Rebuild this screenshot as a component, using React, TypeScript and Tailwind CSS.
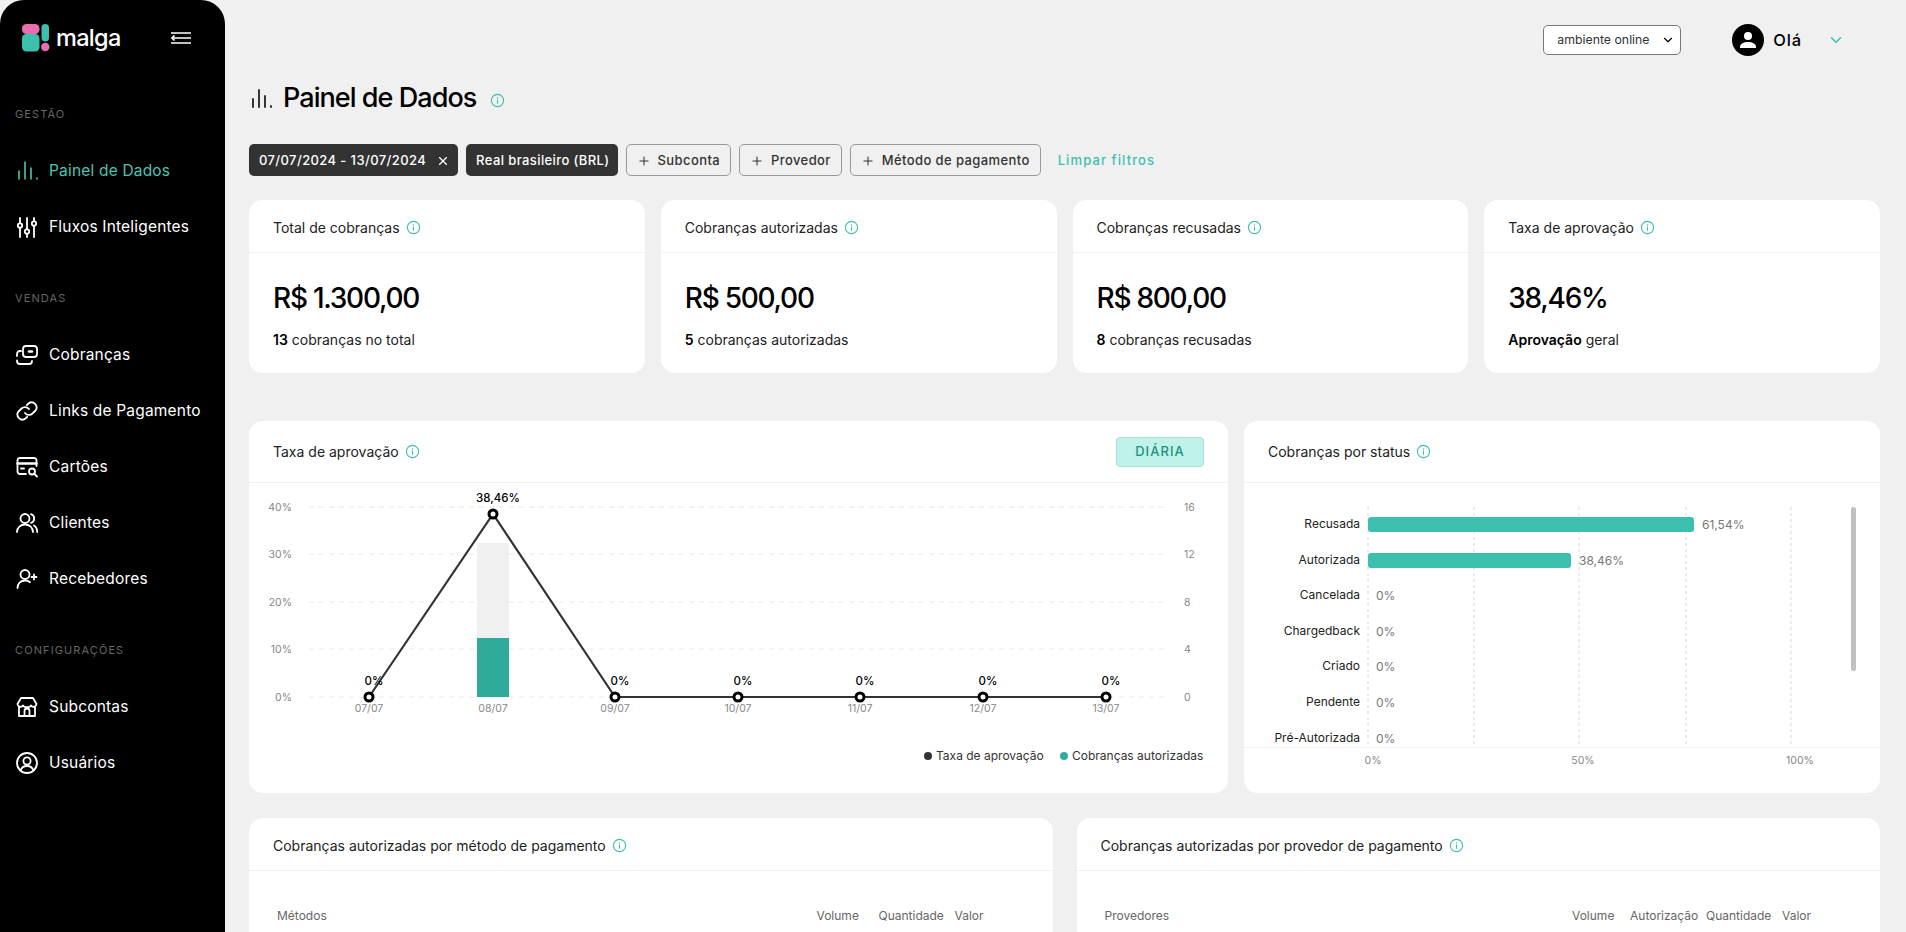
import React from "react";
import { ChevronDown, Plus, X } from "lucide-react";

const font = { fontFamily: "Inter, 'Noto Sans', sans-serif" };

function Info({ className = "" }: { className?: string }) {
  return (
    <svg viewBox="0 0 16 16" className={"w-[15px] h-[15px] shrink-0 " + className} fill="none">
      <circle cx="8" cy="8" r="6.5" stroke="#3dbfae" strokeWidth="1.2" />
      <path d="M8 7.4v3.4" stroke="#3dbfae" strokeWidth="1.2" strokeLinecap="round" />
      <circle cx="8" cy="5.2" r="0.8" fill="#3dbfae" />
    </svg>
  );
}

function BarsIcon({ color, className, width = 1.6 }: { color: string; className: string; width?: number }) {
  return (
    <svg viewBox="0 0 24 24" className={className} fill="none" stroke={color} strokeWidth={width} strokeLinecap="round">
      <path d="M4 20v-8M10 20V3M16 20V9M22 20v-1" />
    </svg>
  );
}

const S = { fill: "none", stroke: "#fff", strokeWidth: 1.8, strokeLinecap: "round" as const, strokeLinejoin: "round" as const };

const icons: Record<string, React.ReactNode> = {
  bars: <BarsIcon color="#4dc4b2" className="w-6 h-6" />,
  flows: (
    <svg viewBox="0 0 24 24" className="w-6 h-6" {...S}>
      <path d="M5 3v5M5 13v9M12 3v11M12 19v3M19 3v3M19 11v11" />
      <circle cx="5" cy="10.5" r="2.2" />
      <circle cx="12" cy="16.5" r="2.2" />
      <circle cx="19" cy="8.5" r="2.2" />
    </svg>
  ),
  charges: (
    <svg viewBox="0 0 24 24" className="w-6 h-6" {...S}>
      <rect x="8" y="3" width="14" height="11" rx="3" />
      <path d="M14 8.500h3" strokeWidth="2.600" />
      <path d="M6 8H5a3 3 0 0 0-3 3v2M2 17.500v.500a3 3 0 0 0 3 3h9a3 3 0 0 0 3-3" />
    </svg>
  ),
  link: (
    <svg viewBox="0 0 24 24" className="w-6 h-6" {...S}>
      <path d="M10 14a5 5 0 0 0 7.500.500l3-3a5 5 0 0 0-7-7l-1.700 1.700" />
      <path d="M14 10a5 5 0 0 0-7.500-.500l-3 3a5 5 0 0 0 7 7l1.700-1.700" />
    </svg>
  ),
  cards: (
    <svg viewBox="0 0 24 24" className="w-6 h-6" {...S}>
      <path d="M11 19H5a2.500 2.500 0 0 1-2.500-2.500v-11A2.500 2.500 0 0 1 5 3h14a2.500 2.500 0 0 1 2.500 2.500V11" />
      <path d="M2.500 8.500h19" strokeWidth="2.400" />
      <path d="M6 13.500h3" />
      <circle cx="17" cy="16.500" r="3" />
      <path d="m19.500 19 2.500 2.500" />
    </svg>
  ),
  users: (
    <svg viewBox="0 0 24 24" className="w-6 h-6" {...S}>
      <circle cx="10" cy="7.500" r="4.500" />
      <path d="M2 21c0-4.500 3.500-7.500 8-7.500s8 3 8 7.500" />
      <path d="M16 3.200a4.500 4.500 0 0 1 0 8.600M19 14.500c2 1.200 3.200 3.500 3.200 6.500" />
    </svg>
  ),
  receivers: (
    <svg viewBox="0 0 24 24" className="w-6 h-6" {...S}>
      <circle cx="10" cy="7.500" r="4.500" />
      <path d="M2.500 21c0-4.500 3.200-7.500 7.500-7.500 2 0 3.700.600 5 1.700" />
      <path d="M19 7.500v5M16.500 10h5" />
    </svg>
  ),
  store: (
    <svg viewBox="0 0 24 24" className="w-6 h-6" {...S}>
      <path d="M6 3h12l3.500 6a3 3 0 0 1-5.500 1.500A3.500 3.500 0 0 1 12 12a3.500 3.500 0 0 1-4-1.500A3 3 0 0 1 2.500 9z" />
      <path d="M4 12v9h16v-9M9.500 21v-5a2.500 2.500 0 0 1 5 0v5" />
    </svg>
  ),
  user: (
    <svg viewBox="0 0 24 24" className="w-6 h-6" {...S}>
      <circle cx="12" cy="12" r="10" />
      <circle cx="12" cy="10" r="3.600" />
      <path d="M5.500 19.500c1-3 3.500-4.500 6.500-4.500s5.500 1.500 6.500 4.500" />
    </svg>
  ),
};

function Section({ label, className }: { label: string; className: string }) {
  return (
    <div className={"pl-[15px] h-4 flex items-center text-[11px] tracking-[0.1em] text-[#666] " + className}>{label}</div>
  );
}

function NavItem({ icon, label, active }: { icon: string; label: string; active?: boolean }) {
  return (
    <div className="h-14 pl-[15px] flex items-center gap-[10px]">
      <span className="w-6 h-6 shrink-0">{icons[icon]}</span>
      <span className={"text-[15.5px] tracking-[0.012em] " + (active ? "text-[#4dc4b2]" : "text-white")}>{label}</span>
    </div>
  );
}

function Sidebar() {
  return (
    <aside className="w-[225px] shrink-0 h-full bg-black rounded-t-[24px] flex flex-col">
      <div className="h-[76px] pl-[22px] pr-[34px] pt-[24px] flex items-start justify-between">
        <div className="flex items-start gap-[6px]">
          <svg viewBox="0 0 28 28" className="w-7 h-7">
            <rect x="0" y="0" width="17.500" height="10" rx="4.500" fill="#e86fae" />
            <rect x="0" y="10" width="17.500" height="17.500" rx="4.500" fill="#3dbfae" />
            <rect x="19.500" y="0" width="7.500" height="17.500" rx="3.700" fill="#3dbfae" />
            <circle cx="23.250" cy="23" r="4.200" fill="#e86fae" />
          </svg>
          <span className="text-white text-[23.500px] font-medium leading-[28px] tracking-[-0.03em]">malga</span>
        </div>
        <svg viewBox="0 0 20 12" className="w-5 h-3 mt-2" fill="none" stroke="#fff" strokeWidth="1.600">
          <path d="M0 1h20M2 6h18M0 11h20" />
          <path d="M3.500 3.500 1 6l2.500 2.500" />
        </svg>
      </div>
      <Section label="GESTÃO" className="mt-[30px]" />
      <div className="mt-[21px]">
        <NavItem icon="bars" label="Painel de Dados" active />
        <NavItem icon="flows" label="Fluxos Inteligentes" />
      </div>
      <Section label="VENDAS" className="mt-[35px]" />
      <div className="mt-[21px]">
        <NavItem icon="charges" label="Cobranças" />
        <NavItem icon="link" label="Links de Pagamento" />
        <NavItem icon="cards" label="Cartões" />
        <NavItem icon="users" label="Clientes" />
        <NavItem icon="receivers" label="Recebedores" />
      </div>
      <Section label="CONFIGURAÇÕES" className="mt-[35px]" />
      <div className="mt-[21px]">
        <NavItem icon="store" label="Subcontas" />
        <NavItem icon="user" label="Usuários" />
      </div>
    </aside>
  );
}

function CardHeader({ title, right }: { title: string; right?: React.ReactNode }) {
  return (
    <div className="flex items-center justify-between border-b border-[#f0f0f0] px-6 h-[53px] pt-[2px]">
      <div className="flex items-center gap-[6px] text-[14px] text-[#222]">
        <span>{title}</span>
        <Info />
      </div>
      {right}
    </div>
  );
}

function Stat({ title, value, bold, rest }: { title: string; value: string; bold: string; rest: string }) {
  return (
    <div className="bg-white rounded-[14px] h-[173px]">
      <CardHeader title={title} />
      <div className="px-6 pt-[27px]">
        <div className="text-[28px] leading-[36px] font-medium tracking-[-0.045em] text-black">{value}</div>
        <div className="mt-[14px] text-[14px] leading-5 text-[#222]">
          <span className="font-semibold text-black">{bold}</span> {rest}
        </div>
      </div>
    </div>
  );
}

function Chip({ children }: { children: React.ReactNode }) {
  return (
    <div className="h-8 pt-[2px] pl-[10px] pr-[8px] bg-[#333] rounded-[5px] text-white text-[13px] font-medium tracking-[0.4px] flex items-center gap-[10px]">{children}</div>
  );
}

function AddChip({ label }: { label: string }) {
  return (
    <div className="h-8 pt-[2px] px-[10px] border border-[#999] rounded-[5px] text-[#333] text-[13px] font-medium flex items-center gap-[7px] tracking-[0.4px]">
      <Plus size={14} strokeWidth={1.8} />
      {label}
    </div>
  );
}

const points = [369, 493, 615, 738, 860, 983, 1106];
const dates = ["07/07", "08/07", "09/07", "10/07", "11/07", "12/07", "13/07"];
const ys = [507, 554, 602, 649, 697];

function LineChart() {
  const ox = 249;
  const oy = 483;
  return (
    <svg width="979" height="310" viewBox={`${ox} ${oy} 979 310`} className="block" style={font}>
      {ys.map((y) => (
        <line key={y} x1="309" x2="1168" y1={y} y2={y} stroke="#e8e8e8" strokeDasharray="5 5" />
      ))}
      {["40%", "30%", "20%", "10%", "0%"].map((t, i) => (
        <text key={t} x="292" y={ys[i] + 4} textAnchor="end" fontSize="10.500" fill="#888">{t}</text>
      ))}
      {["16", "12", "8", "4", "0"].map((t, i) => (
        <text key={t} x="1184" y={ys[i] + 4} fontSize="10.500" fill="#888">{t}</text>
      ))}
      <rect x="477" y="543" width="32" height="95" fill="#f0f0f0" />
      <rect x="477" y="638" width="32" height="59" fill="#2fab9b" />
      <polyline
        points={points.map((x, i) => `${x},${i === 1 ? 514 : 697}`).join(" ")}
        fill="none"
        stroke="#333"
        strokeWidth="2.200"
      />
      {points.map((x, i) => (
        <g key={x}>
          <circle cx={x} cy={i === 1 ? 514 : 697} r="4" fill="#fff" stroke="#000" strokeWidth="3" />
          <text x={x + 5} y={i === 1 ? 502 : 685} textAnchor="middle" fontSize="11.500" fontWeight="500" fill="#000">
            {i === 1 ? "38,46%" : "0%"}
          </text>
          <text x={x} y="712" textAnchor="middle" fontSize="10.500" fill="#888">{dates[i]}</text>
        </g>
      ))}
      <circle cx="928" cy="756" r="4" fill="#333" />
      <text x="936" y="760" fontSize="12" fill="#333">Taxa de aprovação</text>
      <circle cx="1064" cy="756" r="4" fill="#2fab9b" />
      <text x="1072" y="760" fontSize="12" fill="#333">Cobranças autorizadas</text>
    </svg>
  );
}

const statusRows: [string, number, string, number][] = [
  ["Recusada", 326, "61,54%", 524],
  ["Autorizada", 203, "38,46%", 560],
  ["Cancelada", 0, "0%", 595],
  ["Chargedback", 0, "0%", 631],
  ["Criado", 0, "0%", 666],
  ["Pendente", 0, "0%", 702],
  ["Pré-Autorizada", 0, "0%", 738],
];

function StatusChart() {
  const ox = 1244;
  const oy = 483;
  return (
    <svg width="636" height="310" viewBox={`${ox} ${oy} 636 310`} className="block" style={font}>
      {[1368, 1474, 1579, 1686, 1791].map((x) => (
        <line key={x} x1={x} x2={x} y1="507" y2="747" stroke="#d8d8d8" strokeDasharray="3 3" />
      ))}
      {statusRows.map(([label, w, val, y]) => (
        <g key={label}>
          <text x="1360" y={y + 4} textAnchor="end" fontSize="12" fill="#222">{label}</text>
          {w > 0 && <rect x="1368" y={y - 7} width={w} height="15" rx="3" fill="#3dbfae" />}
          <text x={w > 0 ? 1368 + w + 8 : 1376} y={y + 5} fontSize="12" fill="#777">{val}</text>
        </g>
      ))}
      <rect x="1851" y="507" width="5" height="164" rx="2.500" fill="#c0c0c0" />
      <line x1="1244" x2="1880" y1="747.500" y2="747.500" stroke="#f0f0f0" />
      {[["0%", 1373], ["50%", 1583], ["100%", 1800]].map(([t, x]) => (
        <text key={t} x={x} y="764" textAnchor="middle" fontSize="10.500" fill="#888">{t}</text>
      ))}
    </svg>
  );
}

function TableCard({ title, first, cols }: { title: string; first: string; cols: [string, string][] }) {
  return (
    <div className="bg-white rounded-t-[14px] h-[200px] flex-1 min-w-0">
      <CardHeader title={title} />
      <div className="pl-7 pr-[68px] pt-[37px] flex text-[12px] leading-4 text-[#666]">
        <div className="flex-1">{first}</div>
        {cols.map(([c, w]) => (
          <div key={c} className={w}>{c}</div>
        ))}
      </div>
    </div>
  );
}

export default function App() {
  return (
    <div className="h-screen w-full flex overflow-hidden bg-[#f0f0f0] text-[#222]" style={font}>
      <Sidebar />
      <main className="flex-1 min-w-0 pl-6 pr-[26px]">
        <div className="h-[70px] flex items-start justify-end">
          <div className="mt-[25px] w-[138px] h-[30px] bg-white border border-[#777] rounded-[5px] flex items-center pl-[13px] gap-[11px] text-[12.300px] text-[#333]">
            ambiente online
            <ChevronDown size={14} strokeWidth={2} className="text-black" />
          </div>
          <div className="mt-6 ml-[51px] mr-[35px] flex items-center">
            <div className="w-8 h-8 rounded-full bg-black flex items-center justify-center">
              <svg viewBox="0 0 24 24" className="w-6 h-6" fill="#fff">
                <circle cx="12" cy="8" r="4" />
                <path d="M4 19c0-3.500 4-5 8-5s8 1.500 8 5v1H4z" />
              </svg>
            </div>
            <span className="ml-[9px] text-[16.500px] font-medium text-black tracking-[0.05em]">Olá</span>
            <ChevronDown size={18} strokeWidth={2} className="ml-[25px] text-[#3dbfae]" />
          </div>
        </div>
        <div className="h-[56px] flex items-center">
          <BarsIcon color="#222" width={1.8} className="w-6 h-6 mt-[2px] mr-[10px]" />
          <h1 className="text-[27px] font-medium tracking-[-0.035em] text-black">Painel de Dados</h1>
          <Info className="ml-[14px] mt-1" />
        </div>
        <div className="mt-[18px] flex items-center gap-[8px] h-8">
          <Chip>
            07/07/2024 - 13/07/2024
            <X size={14} strokeWidth={2} />
          </Chip>
          <Chip>Real brasileiro (BRL)</Chip>
          <AddChip label="Subconta" />
          <AddChip label="Provedor" />
          <AddChip label="Método de pagamento" />
          <span className="ml-[9px] pt-[2px] text-[13px] font-medium tracking-[0.085em] text-[#3dbfae]">Limpar filtros</span>
        </div>
        <div className="mt-6 grid grid-cols-4 gap-4">
          <Stat title="Total de cobranças" value="R$ 1.300,00" bold="13" rest="cobranças no total" />
          <Stat title="Cobranças autorizadas" value="R$ 500,00" bold="5" rest="cobranças autorizadas" />
          <Stat title="Cobranças recusadas" value="R$ 800,00" bold="8" rest="cobranças recusadas" />
          <Stat title="Taxa de aprovação" value="38,46%" bold="Aprovação" rest="geral" />
        </div>
        <div className="mt-12 flex gap-4">
          <div className="w-[979px] h-[372px] bg-white rounded-[14px] overflow-hidden">
            <div className="h-[62px] border-b border-[#f0f0f0] px-6 flex items-center justify-between">
              <div className="flex items-center gap-[6px] text-[14px] text-[#222]">
                <span>Taxa de aprovação</span>
                <Info />
              </div>
              <div className="w-[88px] h-[30px] rounded-[4px] border border-[#a9dcd3] bg-[#bff3ea] text-[#1f8f7e] text-[13px] font-medium tracking-[0.08em] flex items-center justify-center">
                DIÁRIA
              </div>
            </div>
            <LineChart />
          </div>
          <div className="flex-1 min-w-0 h-[372px] bg-white rounded-[14px] overflow-hidden">
            <div className="h-[62px] border-b border-[#f0f0f0] px-6 flex items-center gap-[6px] text-[14px] text-[#222]">
              <span>Cobranças por status</span>
              <Info />
            </div>
            <StatusChart />
          </div>
        </div>
        <div className="mt-[25px] flex gap-6">
          <TableCard
            title="Cobranças autorizadas por método de pagamento"
            first="Métodos"
            cols={[["Volume", "w-[62px]"], ["Quantidade", "w-[76px]"], ["Valor", "w-[30px]"]]}
          />
          <TableCard
            title="Cobranças autorizadas por provedor de pagamento"
            first="Provedores"
            cols={[["Volume", "w-[58px]"], ["Autorização", "w-[76px]"], ["Quantidade", "w-[76px]"], ["Valor", "w-[30px]"]]}
          />
        </div>
      </main>
    </div>
  );
}
